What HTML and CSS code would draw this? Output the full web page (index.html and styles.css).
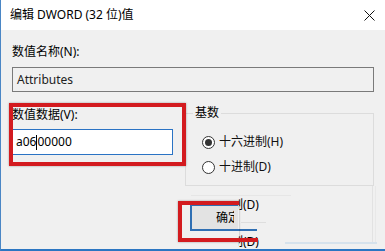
FILE: index.html
```html
<!DOCTYPE html>
<html>
<head>
<meta charset="utf-8">
<link rel="stylesheet" href="styles.css">
</head>
<body>
<div class="window">
  <div class="titlebar">
    <span class="title">编辑 DWORD (32 位)值</span>
    <svg class="close" width="11" height="11" viewBox="0 0 11 11"><path d="M0.5 0.5 L10.5 10.5 M10.5 0.5 L0.5 10.5" stroke="#111" stroke-width="1" fill="none"/></svg>
  </div>
  <div class="content">
    <div class="label">数值名称(N):</div>
    <div class="field readonly">Attributes</div>
    <div class="row">
      <div class="data-col">
        <div class="label">数值数据(V):</div>
        <div class="field input">a06<span class="caret"></span>00000</div>
      </div>
      <div class="group">
        <div class="legend">基数</div>
        <div class="radio"><span class="circle checked"></span>十六进制(H)</div>
        <div class="radio"><span class="circle"></span>十进制(D)</div>
      </div>
    </div>
    <div class="buttons">
      <div class="btn"><span class="btn-text">确定</span></div>
    </div>
  </div>

  <div class="ghost-line g1"></div>
  <div class="ghost-line g2"></div>
  <div class="ghost-line g3"></div>
  <div class="ghost-line g4"></div>
  <div class="ghost-line g5"></div>
  <div class="ghost-text t1"><span>制(D)</span></div>
  <div class="ghost-text t2"><span>制(D)</span></div>
  <div class="ann ann1"></div>
  <div class="ann ann2"></div>
</div>
</body>
</html>
```

FILE: styles.css
```css
html, body {
  margin: 0;
  padding: 0;
}
body {
  font-family: "Noto Sans", "Noto Sans CJK SC", sans-serif;
  font-size: 12px;
  color: #000;
  background: #f0f0f0;
}
.window {
  position: relative;
  width: 385px;
  height: 251px;
  box-sizing: border-box;
  border-left: 1px solid #4a86c5;
  border-bottom: 2px solid #2b76c2;
  background: #f0f0f0;
  overflow: hidden;
}
.titlebar {
  height: 30px;
  background: #fff;
  display: flex;
  align-items: center;
  justify-content: space-between;
  padding: 0 10px 0 9px;
}
.title {
  font-size: 12px;
  line-height: 16px;
}
.close {
  display: block;
}
.content {
  padding: 14px 11px 0 11px;
}
.label {
  line-height: 16px;
  height: 16px;
}
.field {
  box-sizing: border-box;
  border: 1px solid #7a7a7a;
  line-height: 16px;
  padding: 0 4px;
  display: flex;
  align-items: center;
}
.readonly {
  margin-top: 7px;
  height: 25px;
  background: #f0f0f0;
  color: #222;
}
.row {
  display: flex;
  gap: 12px;
  margin-top: 15px;
}
.data-col {
  width: 161px;
}
.input {
  margin-top: 6px;
  height: 26px;
  background: #fff;
  border-color: #2a73c4;
  padding-left: 3px;
}
.caret {
  display: inline-block;
  width: 1px;
  height: 15px;
  background: #000;
}
.group {
  margin-top: 6px;
  width: 189px;
  height: 73px;
  box-sizing: border-box;
  border: 1px solid #dcdcdc;
  padding: 0 0 0 16px;
}
.legend {
  width: fit-content;
  height: 16px;
  margin: -9px 0 0 -9px;
  padding: 0 2px;
  background: #f0f0f0;
  line-height: 16px;
}
.radio {
  display: flex;
  align-items: center;
  gap: 4px;
  line-height: 16px;
  height: 16px;
  color: #111;
}
.legend + .radio {
  margin-top: 13px;
}
.radio + .radio {
  margin-top: 9px;
}
.circle {
  width: 13px;
  height: 13px;
  box-sizing: border-box;
  border: 1px solid #333;
  border-radius: 50%;
  display: flex;
  align-items: center;
  justify-content: center;
  background: #fff;
}
.circle.checked::after {
  content: "";
  width: 7px;
  height: 7px;
  border-radius: 50%;
  background: #333;
}
.buttons {
  display: flex;
  margin-top: 18px;
  padding-left: 178px;
}
.btn {
  position: relative;
  width: 67px;
  height: 27px;
  box-sizing: border-box;
  border-left: 2px solid #2f6fb3;
  border-bottom: 2px solid #2f6fb3;
  background: linear-gradient(to right, #e3e3e3 46px, transparent 46px);
  display: flex;
  align-items: center;
}
.btn::before {
  content: "";
  position: absolute;
  left: -2px;
  top: 0;
  width: 48px;
  height: 2px;
  background: #2f6fb3;
}
.btn-text {
  display: block;
  margin-left: 24px;
  width: 18px;
  overflow: hidden;
  white-space: nowrap;
  line-height: 16px;
  margin-top: 2px;
}
.ghost-line {
  position: absolute;
  background: #e2e2e2;
}
.g1 { left: 190px; top: 195px; width: 100px; height: 1px; background: #e6e6e6; }
.g2 { left: 371px; top: 186px; width: 1px; height: 57px; }
.g3 { left: 374px; top: 186px; width: 1px; height: 57px; background: #e8e8e8; }
.g4 { left: 284px; top: 242px; width: 92px; height: 2px; background: #d6e2ec; }
.g5 { left: 240px; top: 222px; width: 25px; height: 1px; background: #dedede; }
.ghost-text {
  position: absolute;
  left: 237px;
  width: 30px;
  overflow: hidden;
  line-height: 16px;
  white-space: nowrap;
}
.ghost-text span {
  display: block;
  margin-left: -7px;
}
.t1 { top: 197px; }
.t2 { top: 234px; }
.ann {
  position: absolute;
  box-sizing: border-box;
  border: 4px solid #d31b1f;
  box-shadow: 0 0 2px rgba(0,0,0,0.35);
}
.ann1 {
  left: 8px;
  top: 103px;
  width: 177px;
  height: 63px;
}
.ann2 {
  left: 177px;
  top: 201px;
  width: 61px;
  height: 41px;
  border-right: none;
}
.ann2::after {
  content: "";
  position: absolute;
  left: 100%;
  bottom: -4px;
  width: 19px;
  height: 4px;
  background: #d31b1f;
}
```
